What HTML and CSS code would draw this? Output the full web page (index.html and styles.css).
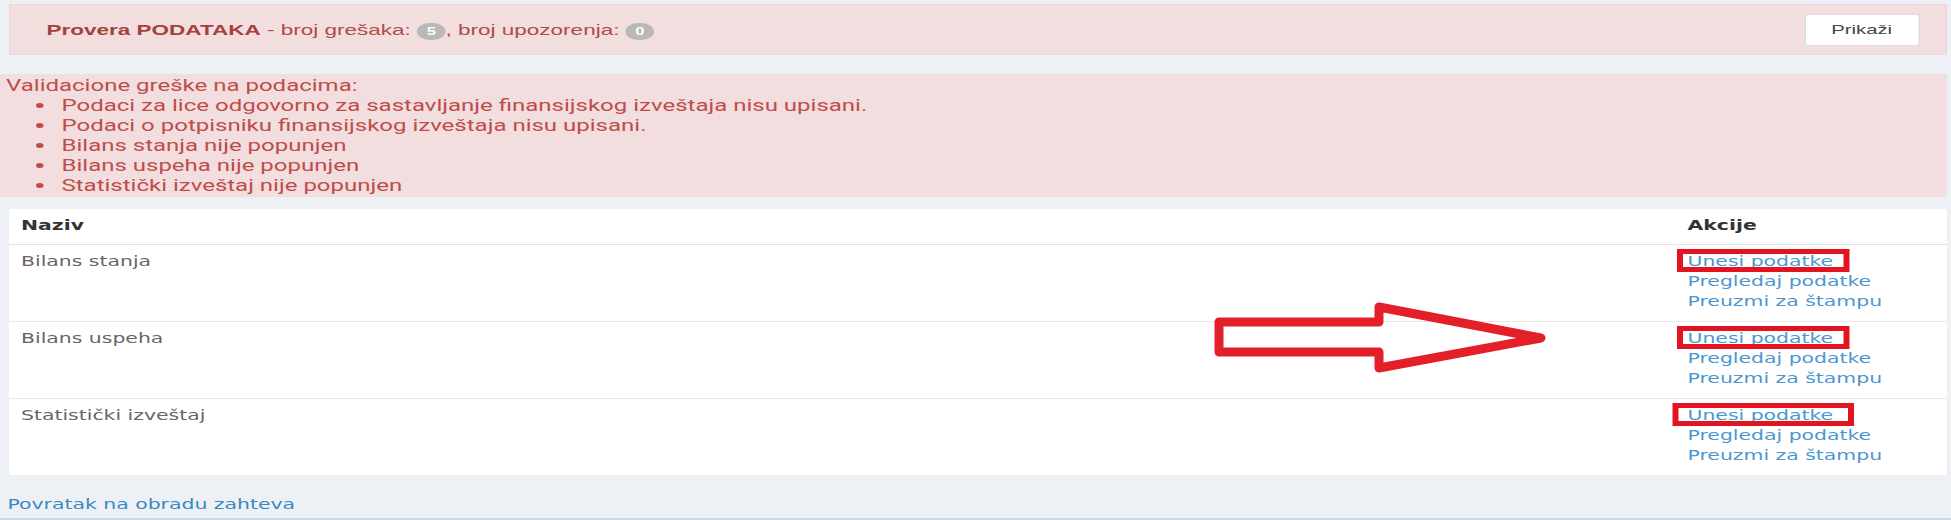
FILE: index.html
```html
<!DOCTYPE html>
<html lang="sr">
<head>
<meta charset="utf-8">
<title>Provera podataka</title>
<link rel="stylesheet" href="styles.css">
</head>
<body>
<div class="page">
  <div class="stretch">
    <div class="check-alert">
      <div class="check-text"><strong>Provera PODATAKA</strong> - broj grešaka: <span class="badge">5</span>, broj upozorenja: <span class="badge">0</span></div>
      <button class="btn" type="button">Prikaži</button>
    </div>

    <div class="errors">
      <div>Validacione greške na podacima:</div>
      <ul class="error-list">
        <li>Podaci za lice odgovorno za sastavljanje finansijskog izveštaja nisu upisani.</li>
        <li>Podaci o potpisniku finansijskog izveštaja nisu upisani.</li>
        <li>Bilans stanja nije popunjen</li>
        <li>Bilans uspeha nije popunjen</li>
        <li>Statistički izveštaj nije popunjen</li>
      </ul>
    </div>

    <table class="reports">
      <thead>
        <tr><th>Naziv</th><th class="col-actions">Akcije</th></tr>
      </thead>
      <tbody>
        <tr>
          <td>Bilans stanja</td>
          <td class="col-actions"><a class="marked" href="#">Unesi podatke</a><br><a href="#">Pregledaj podatke</a><br><a href="#">Preuzmi za štampu</a></td>
        </tr>
        <tr>
          <td>Bilans uspeha</td>
          <td class="col-actions"><a class="marked" href="#">Unesi podatke</a><br><a href="#">Pregledaj podatke</a><br><a href="#">Preuzmi za štampu</a></td>
        </tr>
        <tr>
          <td>Statistički izveštaj</td>
          <td class="col-actions"><a class="marked wide" href="#">Unesi podatke</a><br><a href="#">Pregledaj podatke</a><br><a href="#">Preuzmi za štampu</a></td>
        </tr>
      </tbody>
    </table>

    <div class="back"><a href="#">Povratak na obradu zahteva</a></div>
  </div>

  <svg class="arrow" width="350" height="84" viewBox="1205 296 350 84" aria-hidden="true">
    <path d="M1219 322 L1379 322 L1379 307 L1541 338 L1379 368 L1379 352 L1219 352 Z" fill="none" stroke="#e3202a" stroke-width="9" stroke-linejoin="round"/>
  </svg>
</div>
</body>
</html>
```

FILE: styles.css
```css
* { box-sizing: border-box; }

html, body {
  margin: 0;
  padding: 0;
  background: #edf1f5;
  overflow: hidden;
}

.page {
  position: relative;
  width: 1951px;
  height: 520px;
  border-bottom: 2px solid #c9d8e6;
}

.stretch {
  width: 1300.67px;
  transform: scaleX(1.5);
  transform-origin: 0 0;
  padding-top: 4px;
  font-family: "DejaVu Sans", sans-serif;
  font-size: 13.6px;
  line-height: 20px;
  color: #666;
}

.check-alert {
  margin: 0 3px 0 6px;
  height: 51px;
  background: #f2dede;
  border: 1px solid #efd5d7;
  display: flex;
  align-items: center;
  justify-content: space-between;
  padding: 0 17px 0 24px;
  font-family: "Liberation Sans", Arial, sans-serif;
  font-size: 15px;
  color: #b24a48;
}

.check-text strong {
  color: #a63f3d;
}

.badge {
  display: inline-block;
  min-width: 19px;
  padding: 0 5px;
  border-radius: 9px;
  background: #b9b9b9;
  color: #fff;
  font-size: 11px;
  font-weight: bold;
  line-height: 17px;
  text-align: center;
  vertical-align: 0;
}

.btn {
  height: 32px;
  width: 77px;
  background: #fff;
  border: 1px solid #dcdcdc;
  border-radius: 2px;
  font-family: "Liberation Sans", Arial, sans-serif;
  font-size: 13.5px;
  color: #444;
  padding: 0;
}

.errors {
  margin-top: 19px;
  margin-right: 3px;
  background: #f2dede;
  padding: 2px 4px 1px;
  font-family: Roboto, "Liberation Sans", sans-serif;
  font-size: 16px;
  line-height: 20px;
  color: #bf4c4b;
}

.error-list {
  margin: 0;
  padding-left: 37px;
}

.reports {
  margin: 12px 3px 0 6px;
  width: 1292px;
  border-collapse: collapse;
  background: #fff;
}

.reports th,
.reports td {
  text-align: left;
  vertical-align: top;
  line-height: 20px;
}

.reports th {
  padding: 6px 8px 9px;
  color: #333;
  font-weight: bold;
  border-bottom: 1px solid #e2e2e2;
}

.reports td {
  padding: 6px 8px 10px;
  height: 76px;
  border-top: 1px solid #e8e8e8;
}

.reports .col-actions {
  width: 181px;
}

.reports a,
.back a {
  color: #4b97d1;
  text-decoration: none;
}

.marked {
  position: relative;
}

.marked::after {
  content: "";
  position: absolute;
  left: -7px;
  right: -11px;
  top: -4px;
  bottom: -3px;
  border: 5px solid #e3141f;
  border-left-width: 4px;
  border-right-width: 4px;
}

.marked.wide::after {
  left: -10px;
  right: -14px;
}

.back {
  padding: 19px 0 0 5px;
}

.back a {
  color: #3a88c5;
}

.arrow {
  position: absolute;
  left: 1205px;
  top: 296px;
}
```
